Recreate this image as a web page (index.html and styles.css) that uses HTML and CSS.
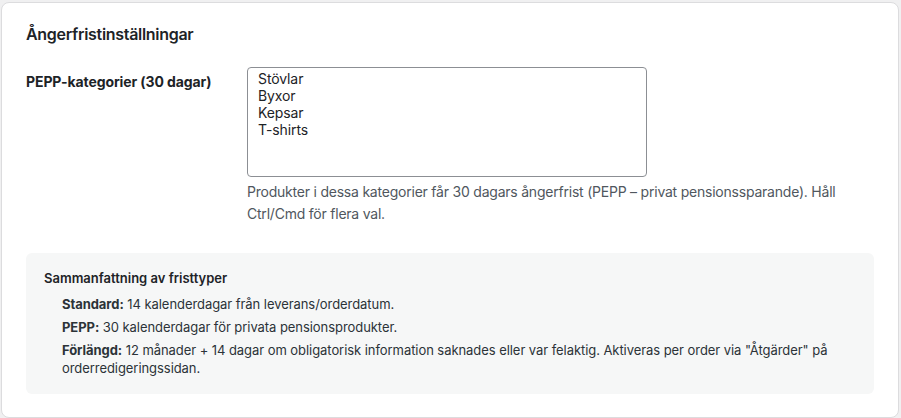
FILE: index.html
```html
<!DOCTYPE html>
<html lang="sv">
<head>
    <meta charset="UTF-8">
    <meta name="viewport" content="width=device-width, initial-scale=1.0">
    <title>Ångerfristinställningar</title>
    <link rel="stylesheet" href="styles.css">
</head>
<body>
    <div class="settings-card">
        <h2 class="card-title">Ångerfristinställningar</h2>

        <div class="field-row">
            <label class="field-label" for="pepp-cats">PEPP-kategorier (30 dagar)</label>
            <div class="field-control">
                <select class="multi-select" id="pepp-cats" multiple>
                    <option>Stövlar</option>
                    <option>Byxor</option>
                    <option>Kepsar</option>
                    <option>T-shirts</option>
                </select>
                <p class="field-help">Produkter i dessa kategorier får 30 dagars ångerfrist (PEPP – privat pensionssparande). Håll Ctrl/Cmd för flera val.</p>
            </div>
        </div>

        <div class="summary-box">
            <h4 class="summary-title">Sammanfattning av fristtyper</h4>
            <ul class="summary-list">
                <li><strong>Standard:</strong> 14 kalenderdagar från leverans/orderdatum.</li>
                <li><strong>PEPP:</strong> 30 kalenderdagar för privata pensionsprodukter.</li>
                <li><strong>Förlängd:</strong> 12 månader + 14 dagar om obligatorisk information saknades eller var felaktig. Aktiveras per order via "Åtgärder" på orderredigeringssidan.</li>
            </ul>
        </div>
    </div>
</body>
</html>
```

FILE: styles.css
```css
body {
    font-family: Inter, "Noto Sans", sans-serif;
    margin: 0;
    padding: 2px 2px 2px 1px;
    background: #f0f0f1;
    color: #1d2327;
}

.settings-card {
    background: #fff;
    border: 1px solid #dcdcde;
    border-radius: 8px;
    padding: 20px 24px 24px 24px;
    height: 370px;
}

.card-title {
    font-size: 16px;
    font-weight: 600;
    letter-spacing: -0.3px;
    margin: 0 0 22px;
    line-height: 22px;
}

.field-row {
    display: flex;
}

.field-label {
    width: 221px;
    flex-shrink: 0;
    font-size: 14px;
    font-weight: 700;
    letter-spacing: -0.1px;
    padding-top: 6px;
    line-height: 18px;
}

.field-control {
    flex: 1;
}

.multi-select {
    display: block;
    width: 400px;
    height: 110px;
    border: 1px solid #8c8f94;
    border-radius: 4px;
    padding: 2px 10px 0;
    font-family: inherit;
    font-size: 14px;
    letter-spacing: -0.1px;
    color: #1d2327;
    background: #fff;
    overflow: hidden;
}

.multi-select option {
    padding: 0;
    line-height: 18px;
}

.field-help {
    margin: 4px 0 0;
    font-size: 14px;
    letter-spacing: -0.22px;
    line-height: 22px;
    color: #50575e;
}

.summary-box {
    margin-top: 28px;
    background: #f6f7f7;
    border-radius: 6px;
    padding: 16px 18px 17px;
}

.summary-title {
    margin: 0 0 8px;
    font-size: 13px;
    font-weight: 600;
    line-height: 18px;
}

.summary-list {
    list-style: none;
    margin: 0;
    padding: 0 0 0 18px;
    font-size: 13px;
    letter-spacing: -0.06px;
    line-height: 18px;
    color: #2c3338;
}

.summary-list li {
    margin-bottom: 5px;
}

.summary-list li:last-child {
    margin-bottom: 0;
}
```
